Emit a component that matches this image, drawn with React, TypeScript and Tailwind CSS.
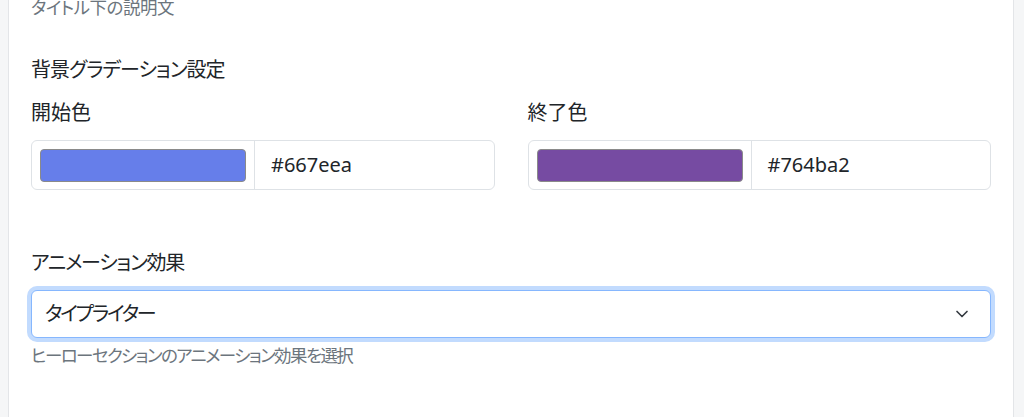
import { ChevronDown } from "lucide-react";

const font = "font-['Noto_Sans','Noto_Sans_CJK_JP',sans-serif] [font-feature-settings:'palt']";

function ColorField({ label, color }: { label: string; color: string }) {
  return (
    <div>
      <div className="mb-[12px] text-[20px] leading-[30px] text-[#212529]">{label}</div>
      <div className="flex h-[50px] overflow-hidden rounded-[6px] border border-[#dee2e6] bg-white">
        <div className="flex w-[223px] shrink-0 items-center border-r border-[#dee2e6] px-[8px]">
          <div
            className="h-[33px] w-full rounded-[4px] border border-[#8a8a8a]"
            style={{ backgroundColor: color }}
          />
        </div>
        <div className="flex flex-1 items-center pl-[16px] text-[20px] text-[#212529]">{color}</div>
      </div>
    </div>
  );
}

export default function App() {
  return (
    <div className={`h-[417px] overflow-hidden bg-[#f5f6f7] ${font}`}>
      <div className="ml-[8px] flow-root h-full w-[1006px] border-x border-[#e3e5e8] bg-white px-[22px]">
        <div className="-mt-[6px] text-[17.5px] leading-[26px] tracking-[-0.5px] text-[#6c757d]">
          タイトル下の説明文
        </div>

        <div className="mt-[35px] mb-[13px] text-[20px] leading-[30px] tracking-[-1px] text-[#212529]">
          背景グラデーション設定
        </div>
        <div className="grid grid-cols-2 gap-x-[33px]">
          <ColorField label="開始色" color="#667eea" />
          <ColorField label="終了色" color="#764ba2" />
        </div>

        <div className="mt-[58px] mb-[12px] text-[20px] leading-[30px] tracking-[-1.3px] text-[#212529]">
          アニメーション効果
        </div>
        <div className="flex h-[48px] items-center justify-between rounded-[6px] border border-[#86b7fe] bg-white pr-[18px] pl-[13px] text-[20px] text-[#212529] shadow-[0_0_0_4px_#c2dbfe]">
          <span className="tracking-[-2.2px]">タイプライター</span>
          <ChevronDown className="size-[20px] text-[#343a40]" strokeWidth={2} aria-hidden="true" />
        </div>
        <div className="mt-[4px] text-[17.5px] leading-[26px] tracking-[-1.6px] text-[#6c757d]">
          ヒーローセクションのアニメーション効果を選択
        </div>
      </div>
    </div>
  );
}
